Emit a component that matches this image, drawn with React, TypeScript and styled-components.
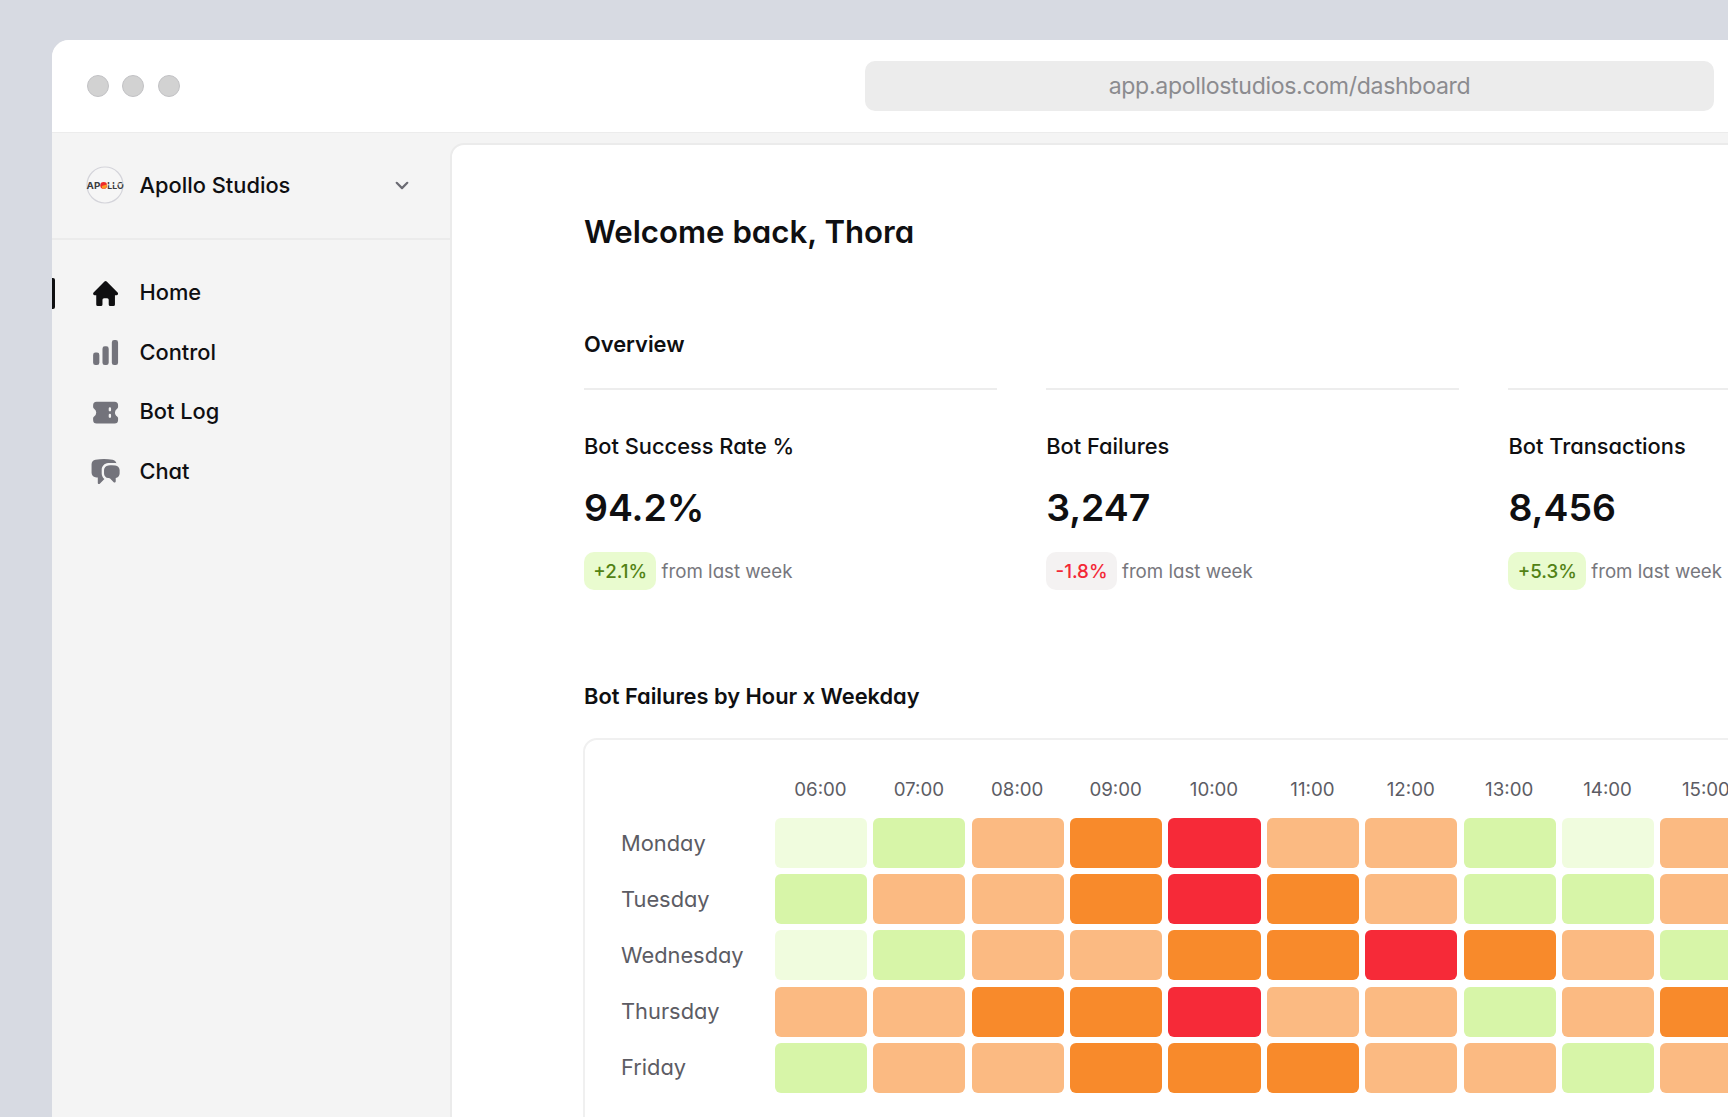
import React from 'react';
import styled, { createGlobalStyle } from 'styled-components';
import { HiMiniHome, HiMiniChartBar, HiMiniTicket, HiMiniChatBubbleLeftRight } from 'react-icons/hi2';

const GlobalStyle = createGlobalStyle`
  * { box-sizing: border-box; }
  html, body { margin: 0; padding: 0; overflow: hidden; }
  body {
    font-family: Inter, "Liberation Sans", sans-serif;
    font-feature-settings: "cv11";
    color: #0f0f11;
    -webkit-font-smoothing: antialiased;
  }
  h1, h2, p { margin: 0; }
`;

const Stage = styled.div`
  width: 100vw;
  height: 100vh;
  overflow: hidden;
  padding: 40px 0 0 52px;
  background: #d7dae2;
`;

const BrowserWindow = styled.div`
  display: flex;
  flex-direction: column;
  width: 2475px;
  height: 1600px;
  overflow: hidden;
  border-radius: 17px;
  background: #f4f4f4;
`;

const TitleBar = styled.header`
  display: grid;
  grid-template-columns: 1fr 849px 1fr;
  align-items: center;
  flex: none;
  height: 93px;
  padding: 0 35px;
  background: #fff;
  border-bottom: 1px solid #ececec;
`;

const WindowButtons = styled.div`
  display: flex;
  gap: 13.4px;
`;

const WindowButton = styled.span`
  width: 22px;
  height: 22px;
  border-radius: 50%;
  background: #d2d2d2;
  border: 1px solid #c2c2c5;
`;

const AddressBar = styled.div`
  height: 50px;
  border-radius: 10px;
  background: #ececec;
  color: #8b8b8f;
  font-size: 23.1px;
  line-height: 50px;
  text-align: center;
  letter-spacing: -0.33px;
  font-feature-settings: normal;
`;

const Body = styled.div`
  display: flex;
  flex: 1;
`;

const Sidebar = styled.aside`
  flex: none;
  width: 398px;
`;

const Workspace = styled.div`
  display: flex;
  align-items: center;
  height: 107px;
  padding: 0 40px 1px 34px;
  border-bottom: 2px solid #ebebeb;
`;

const WorkspaceName = styled.span`
  flex: 1;
  margin-left: 15.6px;
  font-size: 21.84px;
  font-weight: 500;
  line-height: 33px;
`;

const Nav = styled.nav`
  display: flex;
  flex-direction: column;
  padding-top: 24px;
`;

const NavItem = styled.a`
  display: flex;
  align-items: center;
  height: 59.4px;
`;

const Indicator = styled.span<{ $active?: boolean }>`
  width: 3px;
  height: 31px;
  border-radius: 0 2px 2px 0;
  background: ${(p) => (p.$active ? '#0f0f11' : 'transparent')};
`;

const NavIcon = styled.span<{ $active?: boolean }>`
  display: flex;
  margin-left: 34.6px;
  color: ${(p) => (p.$active ? '#0f0f11' : '#73737b')};
  svg { width: 31.2px; height: 31.2px; }
`;

const NavLabel = styled.span`
  margin-left: 18.7px;
  padding-bottom: 1.5px;
  font-size: 21.84px;
  font-weight: 500;
  line-height: 33px;
`;

const Panel = styled.main`
  flex: 1;
  margin-top: 10px;
  padding: 67px 0 0 132px;
  border: 2px solid #ebebeb;
  border-radius: 14px;
  background: #fff;
`;

const Greeting = styled.h1`
  font-size: 31.2px;
  font-weight: 600;
  line-height: 40px;
`;

const SectionTitle = styled.h2<{ $top: number }>`
  margin-top: ${(p) => p.$top}px;
  font-size: 21.84px;
  font-weight: 600;
  line-height: 34px;
`;

const Stats = styled.section`
  display: grid;
  grid-template-columns: repeat(3, 412.5px);
  gap: 49.7px;
  margin-top: 27px;
`;

const Stat = styled.article`
  border-top: 2px solid #ededed;
  padding-top: 39px;
`;

const StatLabel = styled.p`
  font-size: 21.84px;
  font-weight: 500;
  line-height: 34px;
`;

const StatValue = styled.p`
  margin-top: 21px;
  font-size: 37.44px;
  font-weight: 600;
  line-height: 48px;
`;

const StatChange = styled.p`
  display: flex;
  align-items: center;
  gap: 5.2px;
  margin-top: 20px;
  color: #77777d;
  font-size: 18.72px;
  line-height: 37px;
  span { padding-top: 1px; }
`;

const Badge = styled.span<{ $down?: boolean }>`
  padding: 0 9.3px;
  border-radius: 10px;
  font-weight: 500;
  color: ${(p) => (p.$down ? '#f32836' : '#528214')};
  background: ${(p) => (p.$down ? '#f4f2f2' : '#e9fbcf')};
`;

const HeatCard = styled.section`
  width: 1850px;
  height: 700px;
  margin: 25px 0 0 -1px;
  padding: 34px 36px;
  border: 2px solid #f0f0f0;
  border-radius: 14px;
`;

const HeatGrid = styled.div`
  display: grid;
  grid-template-columns: 147.7px repeat(10, 92.3px);
  grid-template-rows: 37.9px repeat(5, 50.1px);
  gap: 6.1px;
`;

const HourLabel = styled.span`
  padding-right: 1px;
  color: #5c5c64;
  font-size: 18.72px;
  line-height: 31px;
  text-align: center;
`;

const DayLabel = styled.span`
  align-self: center;
  padding-bottom: 1px;
  color: #5c5c64;
  font-size: 21.84px;
  line-height: 34px;
`;

const levelColors = {
  a: '#f0fcde',
  b: '#d7f5a8',
  c: '#fbba82',
  d: '#f88a2b',
  e: '#f62a38',
};
type Level = keyof typeof levelColors;

const Cell = styled.span<{ $level: Level }>`
  border-radius: 6px;
  background: ${(p) => levelColors[p.$level]};
`;

const navItems = [
  { label: 'Home', Icon: HiMiniHome, active: true },
  { label: 'Control', Icon: HiMiniChartBar },
  { label: 'Bot Log', Icon: HiMiniTicket },
  { label: 'Chat', Icon: HiMiniChatBubbleLeftRight },
];

const stats = [
  { label: 'Bot Success Rate %', value: '94.2%', change: '+2.1%' },
  { label: 'Bot Failures', value: '3,247', change: '-1.8%', down: true },
  { label: 'Bot Transactions', value: '8,456', change: '+5.3%' },
];

const hours = ['06:00', '07:00', '08:00', '09:00', '10:00', '11:00', '12:00', '13:00', '14:00', '15:00'];

// One letter per hour, from "a" (fewest failures) to "e" (most).
const failures = [
  { day: 'Monday', levels: 'abcdeccbac' },
  { day: 'Tuesday', levels: 'bccdedcbbc' },
  { day: 'Wednesday', levels: 'abccddedcb' },
  { day: 'Thursday', levels: 'ccddeccbcd' },
  { day: 'Friday', levels: 'bccdddccbc' },
];

const ApolloLogo = () => (
  <svg width="38" height="38" viewBox="0 0 38 38">
    <circle cx="19" cy="19" r="18" fill="#f6f6f6" stroke="#d4d4da" strokeWidth="1.2" />
    <text x="0.6" y="22.8" fontSize="9.2" fontWeight="700" fill="#3c3c40" textLength="13.8" lengthAdjust="spacingAndGlyphs">AP</text>
    <circle cx="17.7" cy="19.4" r="3.4" fill="#ee2a2a" />
    <path d="M15.8 20 L20.9 18.4 A3.4 3.4 0 0 1 16 22.3 Z" fill="#fb9a24" />
    <text x="21.3" y="22.8" fontSize="9.2" fontWeight="700" fill="#3c3c40" textLength="16.3" lengthAdjust="spacingAndGlyphs">LLO</text>
    <path d="M20.8 18.9 L37.6 17.7" stroke="#f6f6f6" strokeWidth="0.9" />
  </svg>
);

const Chevron = () => (
  <svg width="16" height="12" viewBox="0 0 16 12" fill="none">
    <path d="M2.7 3.8 L8 9.1 L13.3 3.8" stroke="#6b6b73" strokeWidth="2.2" strokeLinecap="round" strokeLinejoin="round" />
  </svg>
);

export default function App() {
  return (
    <Stage>
      <GlobalStyle />
      <BrowserWindow>
        <TitleBar>
          <WindowButtons>
            <WindowButton />
            <WindowButton />
            <WindowButton />
          </WindowButtons>
          <AddressBar>app.apollostudios.com/dashboard</AddressBar>
        </TitleBar>
        <Body>
          <Sidebar>
            <Workspace>
              <ApolloLogo />
              <WorkspaceName>Apollo Studios</WorkspaceName>
              <Chevron />
            </Workspace>
            <Nav>
              {navItems.map(({ label, Icon, active }) => (
                <NavItem key={label}>
                  <Indicator $active={active} />
                  <NavIcon $active={active}>
                    <Icon />
                  </NavIcon>
                  <NavLabel>{label}</NavLabel>
                </NavItem>
              ))}
            </Nav>
          </Sidebar>
          <Panel>
            <Greeting>Welcome back, Thora</Greeting>
            <SectionTitle $top={75}>Overview</SectionTitle>
            <Stats>
              {stats.map((s) => (
                <Stat key={s.label}>
                  <StatLabel>{s.label}</StatLabel>
                  <StatValue>{s.value}</StatValue>
                  <StatChange>
                    <Badge $down={s.down}>{s.change}</Badge>
                    <span>from last week</span>
                  </StatChange>
                </Stat>
              ))}
            </Stats>
            <SectionTitle $top={89}>Bot Failures by Hour x Weekday</SectionTitle>
            <HeatCard>
              <HeatGrid>
                <span />
                {hours.map((h) => (
                  <HourLabel key={h}>{h}</HourLabel>
                ))}
                {failures.map(({ day, levels }) => (
                  <React.Fragment key={day}>
                    <DayLabel>{day}</DayLabel>
                    {levels.split('').map((l, i) => (
                      <Cell key={hours[i]} $level={l as Level} />
                    ))}
                  </React.Fragment>
                ))}
              </HeatGrid>
            </HeatCard>
          </Panel>
        </Body>
      </BrowserWindow>
    </Stage>
  );
}
